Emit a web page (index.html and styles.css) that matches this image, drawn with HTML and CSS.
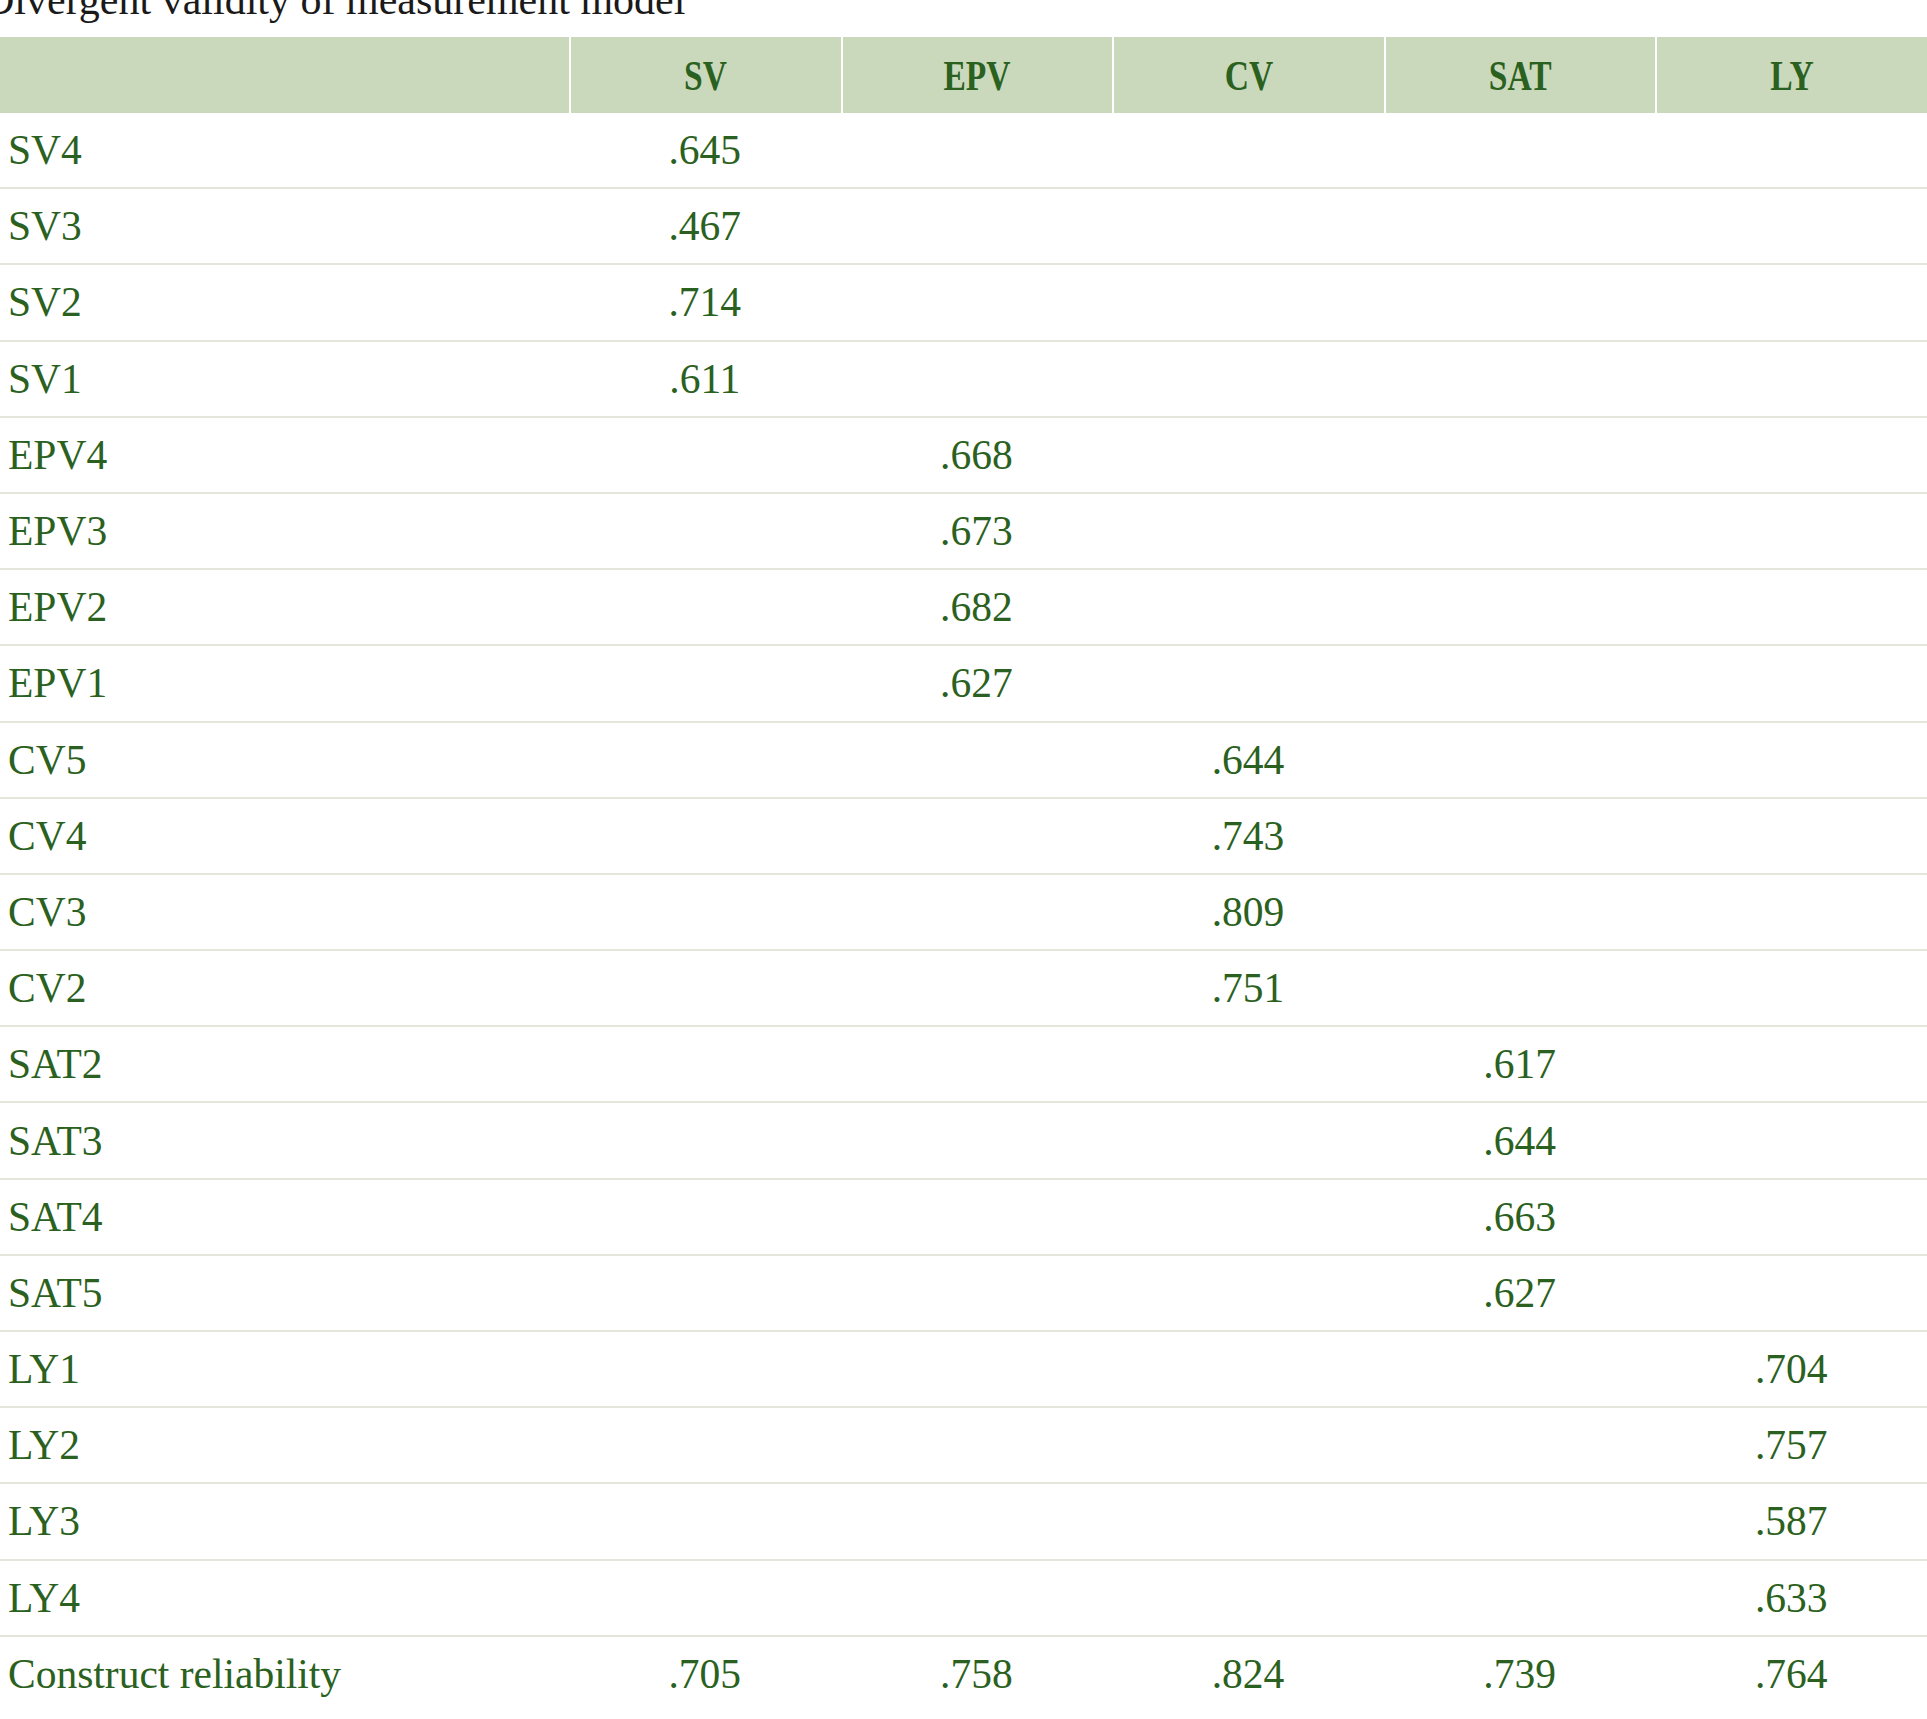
FILE: index.html
```html
<!DOCTYPE html>
<html lang="en">
<head>
<meta charset="utf-8">
<title>Divergent validity of measurement model</title>
<link rel="stylesheet" href="styles.css">
</head>
<body>
<div class="page">
  <div class="caption">Divergent validity of measurement model</div>
  <table class="tbl">
    <colgroup>
      <col class="c-label">
      <col class="c-val">
      <col class="c-val">
      <col class="c-val">
      <col class="c-val">
      <col class="c-val">
    </colgroup>
    <thead>
      <tr>
        <th></th>
        <th><span class="hd">SV</span></th>
        <th><span class="hd">EPV</span></th>
        <th><span class="hd">CV</span></th>
        <th><span class="hd">SAT</span></th>
        <th><span class="hd">LY</span></th>
      </tr>
    </thead>
    <tbody>
      <tr><td>SV4</td><td>.645</td><td></td><td></td><td></td><td></td></tr>
      <tr><td>SV3</td><td>.467</td><td></td><td></td><td></td><td></td></tr>
      <tr><td>SV2</td><td>.714</td><td></td><td></td><td></td><td></td></tr>
      <tr><td>SV1</td><td>.611</td><td></td><td></td><td></td><td></td></tr>
      <tr><td>EPV4</td><td></td><td>.668</td><td></td><td></td><td></td></tr>
      <tr><td>EPV3</td><td></td><td>.673</td><td></td><td></td><td></td></tr>
      <tr><td>EPV2</td><td></td><td>.682</td><td></td><td></td><td></td></tr>
      <tr><td>EPV1</td><td></td><td>.627</td><td></td><td></td><td></td></tr>
      <tr><td>CV5</td><td></td><td></td><td>.644</td><td></td><td></td></tr>
      <tr><td>CV4</td><td></td><td></td><td>.743</td><td></td><td></td></tr>
      <tr><td>CV3</td><td></td><td></td><td>.809</td><td></td><td></td></tr>
      <tr><td>CV2</td><td></td><td></td><td>.751</td><td></td><td></td></tr>
      <tr><td>SAT2</td><td></td><td></td><td></td><td>.617</td><td></td></tr>
      <tr><td>SAT3</td><td></td><td></td><td></td><td>.644</td><td></td></tr>
      <tr><td>SAT4</td><td></td><td></td><td></td><td>.663</td><td></td></tr>
      <tr><td>SAT5</td><td></td><td></td><td></td><td>.627</td><td></td></tr>
      <tr><td>LY1</td><td></td><td></td><td></td><td></td><td>.704</td></tr>
      <tr><td>LY2</td><td></td><td></td><td></td><td></td><td>.757</td></tr>
      <tr><td>LY3</td><td></td><td></td><td></td><td></td><td>.587</td></tr>
      <tr><td>LY4</td><td></td><td></td><td></td><td></td><td>.633</td></tr>
      <tr class="last"><td>Construct reliability</td><td>.705</td><td>.758</td><td>.824</td><td>.739</td><td>.764</td></tr>
    </tbody>
  </table>
</div>
</body>
</html>
```
FILE: styles.css
```css
html, body {
  margin: 0;
  padding: 0;
  background: #ffffff;
}

body {
  font-family: "Liberation Serif", "Times New Roman", serif;
  overflow: hidden;
}

.page {
  width: 1927px;
}

.caption {
  font-size: 42px;
  line-height: 48px;
  color: #1a1a1a;
  margin: -24px 0 13px -16px;
  white-space: nowrap;
}

.tbl {
  width: 1927px;
  table-layout: fixed;
  border-collapse: separate;
  border-spacing: 0;
  color: #2b6120;
}

.c-label {
  width: 569px;
}

.c-val {
  width: 271.6px;
}

.tbl th {
  background: #cad9bb;
  height: 76px;
  padding: 0;
  text-align: center;
  vertical-align: middle;
  font-weight: bold;
}

.tbl th + th {
  border-left: 2px solid #ffffff;
}

.hd {
  display: inline-block;
  font-size: 43px;
  line-height: 43px;
  transform: scaleX(0.78);
}

.tbl tbody tr {
  height: 76.2px;
}

.tbl td {
  padding: 0;
  font-size: 41.5px;
  line-height: 46px;
  text-align: center;
  vertical-align: middle;
  border-bottom: 2px solid #e5e5dc;
  white-space: nowrap;
}

.tbl .last td {
  border-bottom-color: transparent;
}

.tbl td:first-child {
  text-align: left;
  padding-left: 8px;
}
```
